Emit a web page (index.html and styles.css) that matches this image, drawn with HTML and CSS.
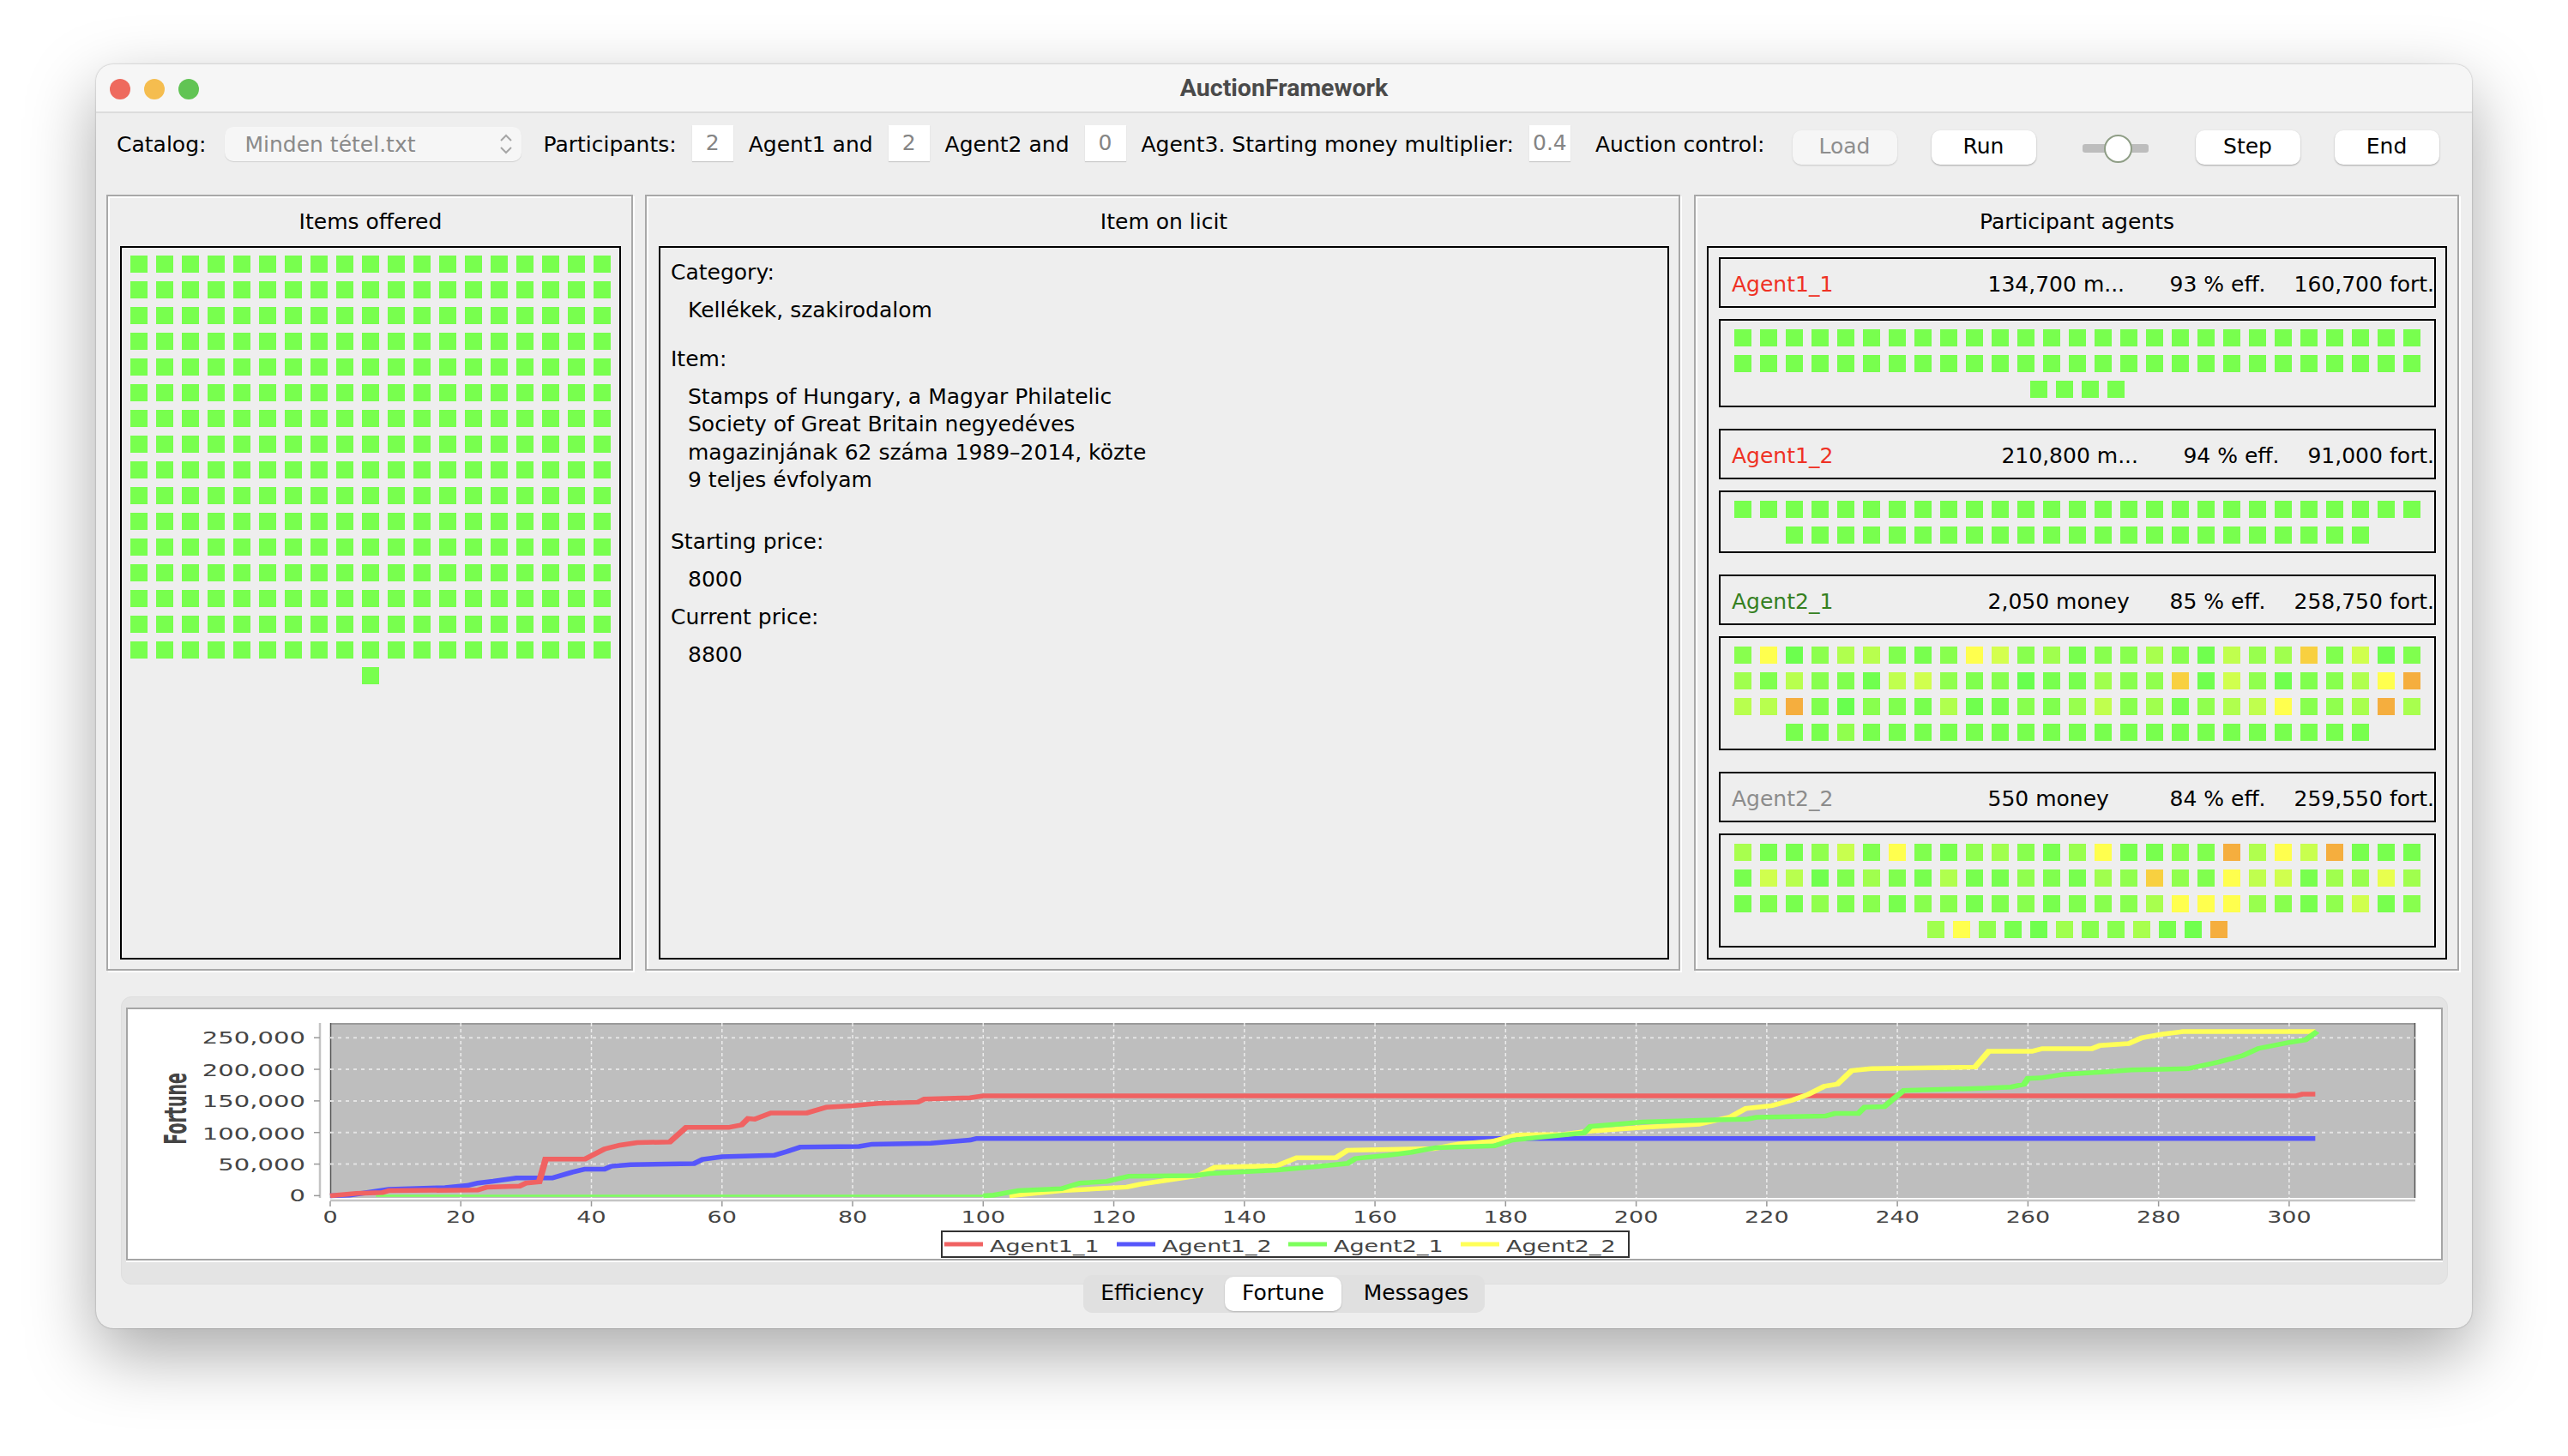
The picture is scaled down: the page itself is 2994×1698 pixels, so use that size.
FILE: index.html
```html
<!DOCTYPE html>
<html lang="en">
<head>
    <meta charset="UTF-8">
    <title>AuctionFramework</title>
    <link rel="stylesheet" href="styles.css">
</head>
<body>
    <div class="window">
        <div class="titlebar">
            <div class="lights">
                <span class="light light-red"></span>
                <span class="light light-yellow"></span>
                <span class="light light-green"></span>
            </div>
            <div class="window-title">AuctionFramework</div>
        </div>

        <div class="toolbar">
            <span class="label">Catalog:</span>
            <div class="combo">
                <span>Minden tétel.txt</span>
                <svg class="combo-arrows" width="16" height="26" viewBox="0 0 16 26">
                    <path d="M2 9 L8 3 L14 9 M2 17 L8 23 L14 17" fill="none" stroke="#a6a6a6" stroke-width="2"/>
                </svg>
            </div>
            <span class="label">Participants:</span>
            <span class="field">2</span>
            <span class="label">Agent1 and</span>
            <span class="field">2</span>
            <span class="label">Agent2 and</span>
            <span class="field">0</span>
            <span class="label">Agent3. Starting money multiplier:</span>
            <span class="field">0.4</span>
            <span class="label label-control">Auction control:</span>
            <button class="btn btn-disabled btn-first">Load</button>
            <button class="btn">Run</button>
            <div class="slider"><span class="slider-knob"></span></div>
            <button class="btn">Step</button>
            <button class="btn">End</button>
        </div>

        <div class="panels">
            <div class="panel panel-items">
                <div class="panel-title">Items offered</div>
                <div class="panel-box chips chips-items" id="itemChips"></div>
            </div>

            <div class="panel panel-licit">
                <div class="panel-title">Item on licit</div>
                <div class="panel-box licit">
                    <div class="licit-label">Category:</div>
                    <div class="licit-value gap-small">Kellékek, szakirodalom</div>
                    <div class="licit-label">Item:</div>
                    <div class="licit-value gap-large">
                        Stamps of Hungary, a Magyar Philatelic<br>
                        Society of Great Britain negyedéves<br>
                        magazinjának 62 száma 1989–2014, közte<br>
                        9 teljes évfolyam
                    </div>
                    <div class="licit-label">Starting price:</div>
                    <div class="licit-value">8000</div>
                    <div class="licit-label">Current price:</div>
                    <div class="licit-value">8800</div>
                </div>
            </div>

            <div class="panel panel-agents">
                <div class="panel-title">Participant agents</div>
                <div class="panel-box agents" id="agentList"></div>
            </div>
        </div>

        <div class="chart-pane">
            <div class="chart-box" id="chart"></div>
        </div>
        <div class="tabs">
            <span class="tab tab-left">Efficiency</span>
            <span class="tab tab-active">Fortune</span>
            <span class="tab tab-right">Messages</span>
        </div>
    </div>

    <script src="app.js"></script>
</body>
</html>
```

FILE: styles.css
```css
* { margin: 0; padding: 0; box-sizing: border-box; }
html, body { height: 100%; overflow: hidden; }
body { background: #fff; padding: 75px 112px 0; font-family: "DejaVu Sans", sans-serif; font-size: 25px; color: #000; }

.window { width: 2770px; height: 1474px; background: #eeeeee; border-radius: 20px; box-shadow: 0 0 2px rgba(0, 0, 0, 0.35), 0 30px 80px rgba(0, 0, 0, 0.34); overflow: hidden; }

.titlebar { position: relative; height: 57px; background: #f6f6f6; border-bottom: 2px solid #dcdcdc; display: flex; align-items: center; justify-content: center; }
.lights { position: absolute; left: 16px; top: 17px; display: flex; gap: 16px; }
.light { width: 24px; height: 24px; border-radius: 50%; }
.light-red { background: #ee6a5e; }
.light-yellow { background: #f5bd4f; }
.light-green { background: #61c454; }
.window-title { font-family: "Roboto", sans-serif; font-weight: 700; font-size: 28.5px; color: #4a4a4a; }

.toolbar { height: 95px; padding: 14px 24px 0; display: flex; align-items: flex-start; }
.toolbar > * { flex: none; }
.label { height: 42px; line-height: 46px; margin-right: 18px; white-space: nowrap; }
.label-control { margin-left: 11px; margin-right: 32px; }
.combo { width: 346px; height: 40px; margin: 2px 25px 0 4px; padding: 0 10px 0 23px; background: #f6f6f6; border-radius: 10px; box-shadow: 0 1px 1px rgba(0, 0, 0, 0.12); color: #8a8a8a; display: flex; align-items: center; justify-content: space-between; }
.combo-arrows { display: block; }
.field { width: 48px; height: 42px; margin-right: 18px; background: #fff; box-shadow: 0 1px 1px rgba(0, 0, 0, 0.15); color: #858585; text-align: center; line-height: 42px; }
.btn { width: 122px; height: 40px; margin: 6px 40px 0 0; padding-bottom: 3px; border: none; background: #fff; border-radius: 10px; box-shadow: 0 1px 2px rgba(0, 0, 0, 0.3); font: inherit; color: #000; }
.btn-disabled { background: #f6f6f6; color: #8e8e8e; box-shadow: 0 1px 2px rgba(0, 0, 0, 0.16); }
.slider { position: relative; width: 77px; height: 10px; margin: 22px 55px 0 14px; background: #bdbdbd; border-radius: 3px; }
.slider-knob { position: absolute; left: 25px; top: -11px; width: 33px; height: 33px; border-radius: 50%; background: #fff; border: 2px solid #8f9e86; }

.panels { display: flex; gap: 14px; height: 905px; padding-left: 12px; }
.panel { display: flex; flex-direction: column; border: 2px solid #a8a8a8; box-shadow: inset 2px 2px 0 #fff, 2px 2px 0 #fff; padding: 0 12px 11px 14px; }
.panel-items { width: 614px; }
.panel-licit { width: 1207px; padding-right: 11px; }
.panel-agents { width: 892px; margin-left: 2px; padding-left: 13px; }
.panel-title { height: 58px; line-height: 60px; text-align: center; }
.panel-box { flex: 1; border: 2px solid #000; min-height: 0; }

.chips { display: flex; flex-wrap: wrap; justify-content: center; align-content: flex-start; gap: 10px; }
.chips-items { padding: 9px 10px 0; }
.chip { width: 20px; height: 20px; background: #78ff4e; }

.licit { padding: 13px 12px; }
.licit-label { line-height: 32px; margin-bottom: 12px; }
.licit-value { line-height: 32.5px; padding-left: 20px; margin-bottom: 12px; }
.gap-small { margin-bottom: 24px; }
.gap-large { margin-bottom: 39px; }

.agents { padding: 11px 11px 0 12px; }
.agent-head { height: 59px; border: 2px solid #000; display: flex; align-items: center; padding: 3px 0 0 13px; margin-bottom: 13px; white-space: nowrap; }
.agent-name { margin-right: auto; }
.agent-money { width: 212px; }
.agent-eff { width: 145px; }
.name-red { color: #ef3124; }
.name-green { color: #35801f; }
.name-gray { color: #8c8c8c; }
.agent-chips { border: 2px solid #000; padding: 10px 16px 9px; margin-bottom: 25px; }

.chart-pane { margin: 30px 28px 0 29px; height: 336px; padding: 12px 5px 29px; background: #e4e4e4; border: 1px solid #dedede; border-radius: 12px; }
.chart-box { height: 295px; background: #fff; border: 2px solid #a5a5a5; box-shadow: 0 2px 0 #fff; }
.chart-box svg { display: block; width: 100%; height: 100%; }

.tabs { width: 468px; height: 44px; margin: -11px auto 0; padding: 2px 0; position: relative; background: #e0e0e0; border-radius: 10px; display: flex; }
.tab { line-height: 38px; white-space: nowrap; text-align: center; }
.tab-left { width: 165px; padding-right: 4px; }
.tab-right { width: 167px; padding-left: 7px; }
.tab-active { width: 136px; background: #fff; border-radius: 10px; box-shadow: 0 1px 2px rgba(0, 0, 0, 0.2); }
```

FILE: app.js
```js
// Chip colours are the red channel of a green-to-yellow ramp, Y/F/O are the hot end
const HOT = { Y: '#ffff4e', F: '#f8d040', O: '#f5ae3e' };
const chipColor = code => HOT[code] || `#${code}ff4e`;

function chipRows(rows) {
    return rows.join(' ').split(' ').map(c => `<div class="chip" style="background:${chipColor(c)}"></div>`).join('');
}

function plain(count) {
    return Array(count).fill('78').join(' ');
}

const agents = [
    { name: 'Agent1_1', cls: 'name-red', money: '134,700 m...', eff: '93 % eff.', fort: '160,700 fort.', rows: [plain(58)] },
    { name: 'Agent1_2', cls: 'name-red', money: '210,800 m...', eff: '94 % eff.', fort: '91,000 fort.', rows: [plain(50)] },
    { name: 'Agent2_1', cls: 'name-green', money: '2,050 money', eff: '85 % eff.', fort: '258,750 fort.', rows: [
        '88 Y 6c 8c b0 b8 80 78 88 Y d4 88 a0 78 88 88 a8 88 70 c0 98 a0 F 80 d0 70 80',
        'a0 80 b8 88 80 70 c0 d0 90 80 88 68 78 78 a0 88 90 F 70 d0 90 70 80 88 b0 Y O',
        'b8 b8 O 80 68 88 80 78 b0 70 78 88 80 98 c0 88 a0 78 90 b0 c0 Y 88 90 a8 O a8',
        '78 78 90 78 78 78 78 78 78 78 78 78 78 78 78 78 78 78 78 78 78 78 78'
    ] },
    { name: 'Agent2_2', cls: 'name-gray', money: '550 money', eff: '84 % eff.', fort: '259,550 fort.', rows: [
        'a8 78 78 90 c8 80 Y 80 78 90 a0 88 78 98 Y 78 78 88 80 O b0 Y c8 O 78 78 78',
        '78 d0 b8 70 80 a0 80 78 b0 78 78 90 80 78 a0 90 F 90 80 Y c0 d0 78 a0 98 e8 a0',
        '78 80 78 90 80 88 78 88 88 78 80 88 78 80 88 88 a8 Y Y Y 98 88 78 90 d0 78 88',
        'a0 Y 90 78 70 a0 88 88 a8 78 70 O'
    ] }
];

document.getElementById('itemChips').innerHTML = chipRows([plain(305)]);

document.getElementById('agentList').innerHTML = agents.map(a => `
    <div class="agent-head">
        <span class="agent-name ${a.cls}">${a.name}</span>
        <span class="agent-money">${a.money}</span>
        <span class="agent-eff">${a.eff}</span>
        <span class="agent-fort">${a.fort}</span>
    </div>
    <div class="agent-chips chips">${chipRows(a.rows)}</div>
`).join('');

// Fortune chart, [round, thousands] per series. Drawn in window pixels through the viewBox.
const series = {
    green0: [[7,0],[100,0]],
    blue: [[0,0],[3,1],[7,7],[9,10],[17.6,12.7],[21,16],[22.6,20],[25,23],[28.5,28],[34,28],[37,37],[39,42],[42,42],[43,46.6],[46,49],[55.7,50.7],[57,57.5],[60,61.5],[68,64],[70,70],[72,77],[81,78],[83,81.5],[92,83],[98,88],[99,90.5],[304,90.5]],
    red: [[0,0],[4,3.6],[8,5],[9,8],[22.6,9],[24,13.5],[29,15],[30,20],[32,22],[33,58],[39,58],[42,74],[44.4,80],[47,84],[52,85],[54.5,108],[61,108],[63,112],[64,122],[65,121],[67.5,131],[73,131],[76,140],[80,142.5],[84,146],[90,148],[91,153],[98,155],[100,158],[301,158],[302,160.6],[304,160.6]],
    yellow: [[104,0],[105,1],[112,8],[122,13.6],[124,18],[133,31.7],[135.5,45],[145,47.5],[148,60],[154,60],[155.8,72],[169,74.7],[173,82],[178,86],[181.7,96],[189,97],[192.6,102],[201.6,108.6],[209.6,113],[214.4,124.4],[216.8,138],[220.8,142.5],[224,151.6],[226.4,160.6],[228.8,173],[230.8,176.5],[233,198],[236,201],[251.9,203.6],[254,228.5],[260.6,228.5],[262.2,232.6],[269.8,232.6],[271,237.6],[275.4,240.7],[277.4,249.8],[280.6,255.7],[283.7,259.7],[304,259.7]],
    green: [[100,0],[101.6,0.9],[105.4,8],[112,11],[114.8,20],[119,22.6],[122.3,30.8],[132.5,31.7],[134.7,35],[145,40.7],[151,46],[155.8,51],[157,58.8],[162,64],[165.6,68.8],[169.3,76],[178.3,79],[181,88],[192,99.5],[193,109.5],[201,116.7],[212,120],[217,121],[218.4,124],[229,126],[230.4,130],[234,130],[235,140],[238,141],[239.5,154],[241,166.5],[253.5,170],[257.4,172],[259.4,176.5],[260,185.5],[262,186.4],[265.4,192],[271.8,196],[275.8,199],[284.5,201],[289.3,211.8],[292.9,221.7],[295.3,233],[299.7,242],[302.5,246.6],[304.3,260]]
};
const colors = { red: '#f06262', blue: '#5656fb', green: '#7cff5c', green0: '#7cff5c', yellow: '#ffff58' };
const widths = { green0: 2.5 };

const STRETCH = 1.4;
const px = t => 385 + t * 7.613;
const py = v => 1393.4 - v * 0.7368;

const xTicks = [];
for (let t = 0; t <= 300; t += 20) xTicks.push(t);
const yTicks = [50, 100, 150, 200, 250];
const yLabelY = { 0: 1400, 50: 1364, 100: 1328, 150: 1290, 200: 1254, 250: 1216 };

let svg = `<svg viewBox="149 1176 2697 291" preserveAspectRatio="none">
    <rect x="385" y="1192" width="2431" height="204" fill="#bebebe"/>
    <path d="M385 1193 H2816" stroke="#9a9a9a" stroke-width="2"/>
    <path d="M385.5 1192 V1396 M2815.5 1192 V1396" stroke="#555" stroke-width="1.5"/>
    <path d="M373 1192 V1396 M385 1399 H2816" stroke="#c4c4c4" stroke-width="2.5"/>`;

xTicks.forEach(t => {
    const x = px(t);
    if (t > 0) svg += `<path d="M${x} 1192 V1396" stroke="#ececec" stroke-width="1.5" stroke-dasharray="4 3"/>`;
    svg += `<path d="M${x} 1400 V1406" stroke="#999" stroke-width="1.5"/>`;
    svg += `<text transform="translate(${x} 1425) scale(1.42 1)" text-anchor="middle" font-family="DejaVu Sans" font-size="19" fill="#444">${t}</text>`;
});

yTicks.forEach(v => {
    svg += `<path d="M385 ${py(v)} H2816" stroke="#e4e4e4" stroke-width="2" stroke-dasharray="4 5"/>`;
});
[0, ...yTicks].forEach(v => {
    const label = v === 0 ? '0' : `${v},000`;
    svg += `<path d="M366 ${py(v)} H373" stroke="#999" stroke-width="1.5"/>`;
    svg += `<text transform="translate(356 ${yLabelY[v]}) scale(1.53 1)" text-anchor="end" font-family="DejaVu Sans" font-size="19" fill="#444">${label}</text>`;
});

svg += `<text transform="translate(217 1292) rotate(-90) scale(1 1.9)" text-anchor="middle" font-family="DejaVu Sans" font-weight="700" font-size="19" fill="#444">Fortune</text>`;

Object.keys(series).forEach(name => {
    const points = series[name].map(p => `${(px(p[0]) / STRETCH).toFixed(1)},${py(p[1]).toFixed(1)}`).join(' ');
    svg += `<polyline transform="scale(${STRETCH} 1)" points="${points}" fill="none" stroke="${colors[name]}" stroke-width="${widths[name] || 5.5}"/>`;
});

svg += `<rect x="1098" y="1435" width="801" height="30" fill="#fff" stroke="#333" stroke-width="2"/>`;
[['red', 1101, 'Agent1_1'], ['blue', 1302, 'Agent1_2'], ['green', 1502, 'Agent2_1'], ['yellow', 1703, 'Agent2_2']].forEach(([c, x, label]) => {
    svg += `<path d="M${x} 1450 H${x + 45}" stroke="${colors[c]}" stroke-width="5"/>`;
    svg += `<text transform="translate(${x + 53} 1459) scale(1.42 1)" font-family="DejaVu Sans" font-size="19" fill="#444">${label}</text>`;
});

svg += '</svg>';
document.getElementById('chart').innerHTML = svg;
```
